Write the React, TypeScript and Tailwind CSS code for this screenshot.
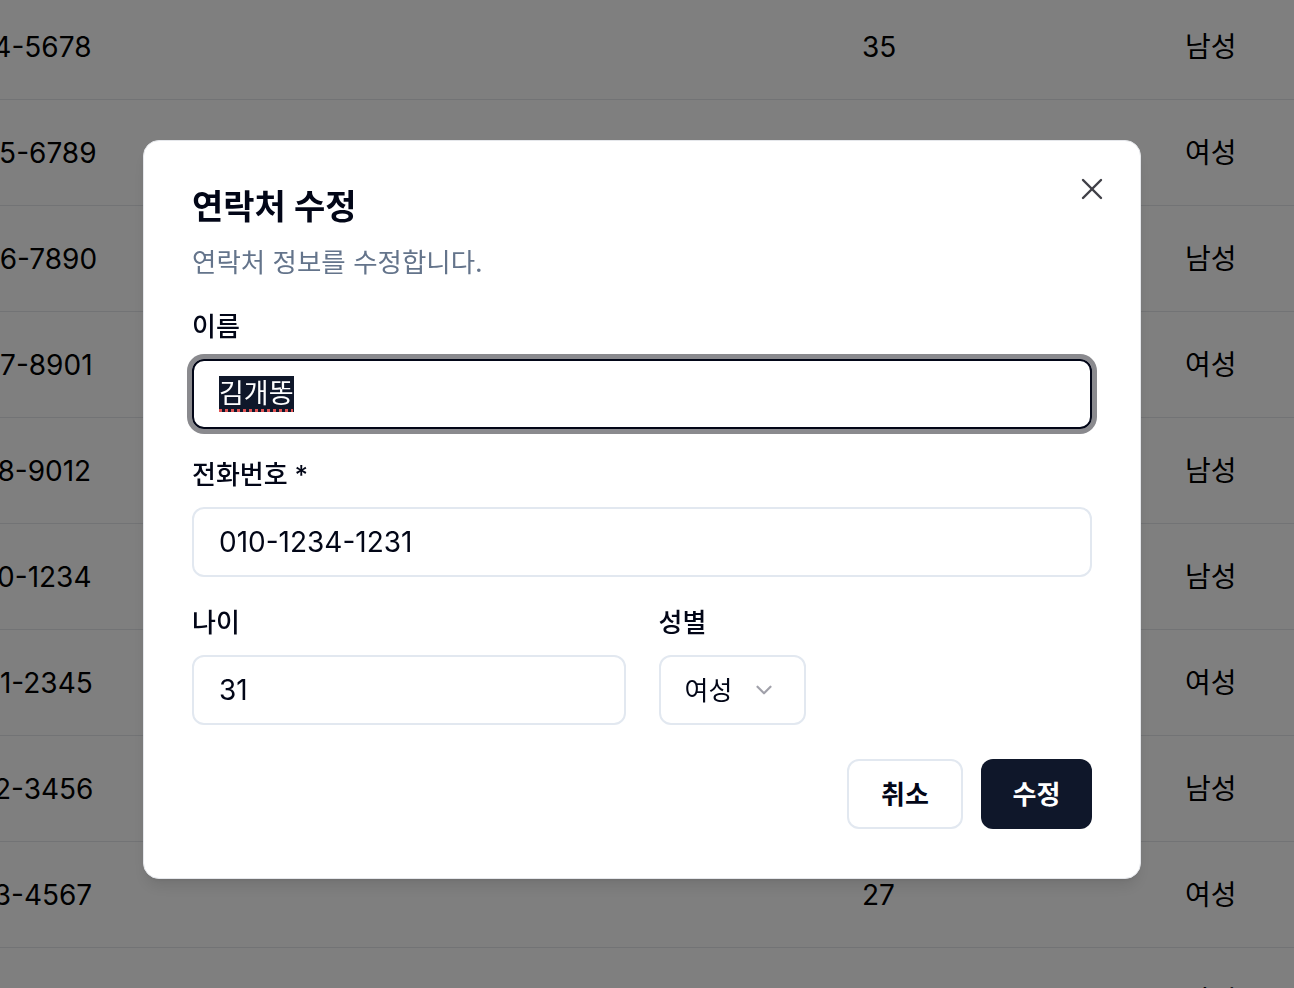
import React from "react";
import { X, ChevronDown } from "lucide-react";

const rows = [
  { phone: "010-1234-5678", age: "35", gender: "남성" },
  { phone: "010-2345-6789", age: "28", gender: "여성" },
  { phone: "010-3456-7890", age: "42", gender: "남성" },
  { phone: "010-4567-8901", age: "31", gender: "여성" },
  { phone: "010-5678-9012", age: "39", gender: "남성" },
  { phone: "010-7890-1234", age: "45", gender: "남성" },
  { phone: "010-8901-2345", age: "26", gender: "여성" },
  { phone: "010-9012-3456", age: "33", gender: "남성" },
  { phone: "010-0123-4567", age: "27", gender: "여성" },
  { phone: "010-1357-2468", age: "30", gender: "남성" },
];

const font = { fontFamily: '"Inter", "Noto Sans CJK KR", sans-serif' };

export default function App() {
  return (
    <div className="relative h-[988px] w-[1294px] overflow-hidden bg-white text-black" style={font}>
      <div className="-mt-[6px] flex flex-col">
        {rows.map((r, i) => (
          <div key={i} className="flex h-[106px] items-center border-b border-[#e5e7eb] text-[28px]">
            <div className="-ml-[112px] w-[974px] shrink-0">{r.phone}</div>
            <div className="w-[323px] shrink-0">{r.age}</div>
            <div className="shrink-0">{r.gender}</div>
          </div>
        ))}
      </div>

      <div className="fixed inset-0 bg-black/50" />

      <div className="fixed left-[143px] top-[140px] w-[998px] rounded-[16px] border border-[#e5e7eb] bg-white px-[48px] pt-[46px] pb-[49px] shadow-lg">
        <button className="absolute right-[30px] top-[30px] text-[#3f3f46]">
          <X size={36} strokeWidth={1.6} />
        </button>
        <div className="text-[34px] font-bold leading-[40px] text-[#020617]">연락처 수정</div>
        <div className="mt-[17px] text-[26.5px] leading-[36px] text-[#64748b]">연락처 정보를 수정합니다.</div>

        <div className="mt-[31px] text-[26px] font-medium leading-[32px] text-[#020617]">이름</div>
        <div className="mt-[16px] flex h-[70px] items-center rounded-[12px] border-2 border-[#020617] px-[25px] text-[27px] ring-[5px] ring-[#8a8a8e]">
          <span className="bg-[#0f172a] leading-[36px] text-white underline decoration-[#e05252] decoration-dotted decoration-[3px] underline-offset-[6px]">
            김개똥
          </span>
        </div>

        <div className="mt-[30px] text-[26px] font-medium leading-[32px] text-[#020617]">전화번호 *</div>
        <div className="mt-[16px] flex h-[70px] items-center rounded-[12px] border-2 border-[#e2e8f0] px-[25px] text-[28px] text-[#020617]">
          010-1234-1231
        </div>

        <div className="mt-[30px] grid grid-cols-2 gap-[33px]">
          <div>
            <div className="text-[26px] font-medium leading-[32px] text-[#020617]">나이</div>
            <div className="mt-[16px] flex h-[70px] items-center rounded-[12px] border-2 border-[#e2e8f0] px-[25px] text-[28px] text-[#020617]">
              31
            </div>
          </div>
          <div>
            <div className="text-[26px] font-medium leading-[32px] text-[#020617]">성별</div>
            <div className="mt-[16px] flex h-[70px] w-[147px] items-center justify-between rounded-[12px] border-2 border-[#e2e8f0] pl-[24px] pr-[27px] text-[26px] text-[#020617]">
              <span>여성</span>
              <ChevronDown size={26} strokeWidth={2} className="text-[#a1a1aa]" />
            </div>
          </div>
        </div>

        <div className="mt-[34px] flex justify-end gap-[18px]">
          <button className="flex h-[70px] w-[116px] items-center justify-center rounded-[12px] border-2 border-[#e2e8f0] bg-white text-[26px] font-semibold text-[#020617]">
            취소
          </button>
          <button className="flex h-[70px] w-[111px] items-center justify-center rounded-[12px] bg-[#0f172a] text-[26px] font-semibold text-white">
            수정
          </button>
        </div>
      </div>
    </div>
  );
}
